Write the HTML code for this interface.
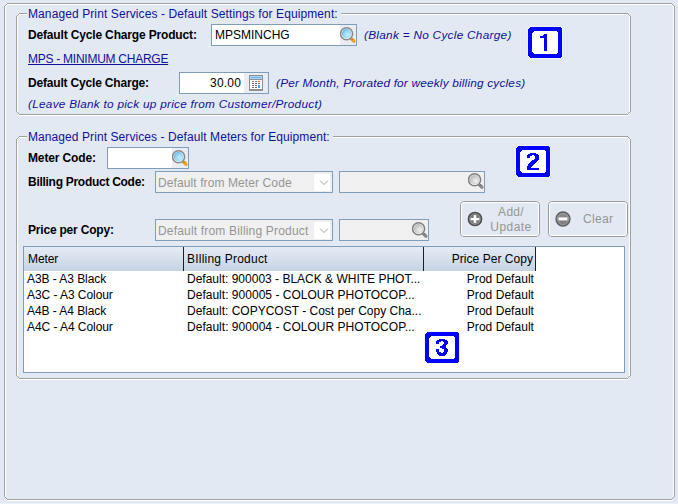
<!DOCTYPE html>
<html><head><meta charset="utf-8">
<style>
*{box-sizing:border-box;margin:0;padding:0}
html,body{width:678px;height:504px;overflow:hidden;background:#E3E9F3;font-family:"Liberation Sans",sans-serif;font-size:12px;position:relative}
.a{position:absolute}
.t{position:absolute;white-space:nowrap;line-height:16px}
.b{font-weight:bold;color:#000}
.i{font-style:italic;color:#10109C;font-size:11.8px}
.ttl{color:#10109C;background:#E3E9F3;padding:0 3px 0 1px}
.inp{position:absolute;border:1px solid #7F9DB9;background:#fff}
.dis{background:#F0F0F0}
.btnbg{position:absolute;background:#E9EDF3}
.gtxt{color:#959595}
.sep{position:absolute;width:1px;background:#1E1E1E}
</style></head><body>
<div class="a" style="left:0;top:503px;width:678px;height:1px;background:#ECF0F7"></div>
<svg class="a" style="left:4px;top:3px" width="671" height="498" viewBox="0 0 671 498" shape-rendering="crispEdges">
<g fill="#A0A0A0"><rect x="3" y="0" width="665" height="1"/><rect x="0" y="3" width="1" height="491"/><rect x="670" y="3" width="1" height="491"/><rect x="3" y="496" width="665" height="1"/>
<rect x="1" y="2" width="1" height="1"/><rect x="2" y="1" width="1" height="1"/>
<rect x="668" y="1" width="1" height="1"/><rect x="669" y="2" width="1" height="1"/>
<rect x="1" y="494" width="1" height="1"/><rect x="2" y="495" width="1" height="1"/>
<rect x="668" y="495" width="1" height="1"/><rect x="669" y="494" width="1" height="1"/></g>
<g fill="#FFFFFF"><rect x="3" y="1" width="665" height="1"/><rect x="1" y="3" width="1" height="491"/><rect x="669" y="3" width="1" height="491"/><rect x="3" y="497" width="665" height="1"/>
<rect x="2" y="2" width="1" height="1"/><rect x="668" y="2" width="1" height="1"/><rect x="2" y="496" width="1" height="1"/><rect x="668" y="496" width="1" height="1"/></g>
</svg><svg class="a" style="left:16px;top:13px" width="615" height="103" viewBox="0 0 615 103" shape-rendering="crispEdges">
<g fill="#A0A0A0"><rect x="3" y="0" width="609" height="1"/><rect x="0" y="3" width="1" height="96"/><rect x="614" y="3" width="1" height="96"/><rect x="3" y="101" width="609" height="1"/>
<rect x="1" y="2" width="1" height="1"/><rect x="2" y="1" width="1" height="1"/>
<rect x="612" y="1" width="1" height="1"/><rect x="613" y="2" width="1" height="1"/>
<rect x="1" y="99" width="1" height="1"/><rect x="2" y="100" width="1" height="1"/>
<rect x="612" y="100" width="1" height="1"/><rect x="613" y="99" width="1" height="1"/></g>
<g fill="#FFFFFF"><rect x="3" y="1" width="609" height="1"/><rect x="1" y="3" width="1" height="96"/><rect x="613" y="3" width="1" height="96"/><rect x="3" y="102" width="609" height="1"/>
<rect x="2" y="2" width="1" height="1"/><rect x="612" y="2" width="1" height="1"/><rect x="2" y="101" width="1" height="1"/><rect x="612" y="101" width="1" height="1"/></g>
</svg><div id="t1" class="t ttl" style="letter-spacing:0.1px;left:27px;top:6px">Managed Print Services - Default Settings for Equipment:</div>
<div id="t2" class="t b" style="letter-spacing:-0.16px;left:28px;top:27px">Default Cycle Charge Product:</div>
<div class="inp" style="left:211px;top:24px;width:146px;height:22px"></div>
<div class="btnbg" style="left:340px;top:25px;width:16px;height:20px"></div>
<svg class="a" style="left:340px;top:27px" width="17" height="17" viewBox="0 0 17 17">
<defs><radialGradient id="mg340_27" cx="0.62" cy="0.62" r="0.65"><stop offset="0" stop-color="#C4F2FD"/><stop offset="0.7" stop-color="#92D2F4"/><stop offset="1" stop-color="#5EB2EC"/></radialGradient></defs>
<path d="M11.8,12.1 L13.9,14.2" stroke="#D4901E" stroke-width="3.2" stroke-linecap="round"/>
<circle cx="13.5" cy="13.8" r="1.1" fill="#FFB020"/>
<circle cx="10.8" cy="11.1" r="1" fill="#9AB0C8"/>
<circle cx="6.6" cy="6.8" r="6" fill="#FFFFFF" stroke="#8A8A8A" stroke-width="1.6"/>
<circle cx="6.6" cy="6.8" r="4.7" fill="url(#mg340_27)"/>
</svg><div id="t3" class="t" style="left:215px;top:27px;color:#000">MPSMINCHG</div>
<div id="t4" class="t i" style="letter-spacing:0.28px;left:364px;top:27px">(Blank = No Cycle Charge)</div>
<svg class="a" style="left:527px;top:26px" width="36" height="33" viewBox="-1 -1 36 33" shape-rendering="crispEdges">
<path d="M2,-1H32L35,2V29L32,32H2L-1,29V2Z" fill="#F2F6F0" opacity="0.8"/>
<path d="M2,0H32L34,2V29L32,31H2L0,29V2Z" fill="#0000FF"/>
<path d="M6,4H28L30,6V25L28,27H6L4,25V6Z" fill="#FFFFFF"/>
<g fill="#0000FF"><rect x="16" y="7" width="3" height="1"/><rect x="15" y="8" width="4" height="1"/><rect x="12" y="9" width="7" height="1"/><rect x="12" y="10" width="7" height="1"/><rect x="16" y="11" width="3" height="1"/><rect x="16" y="12" width="3" height="1"/><rect x="16" y="13" width="3" height="1"/><rect x="16" y="14" width="3" height="1"/><rect x="16" y="15" width="3" height="1"/><rect x="16" y="16" width="3" height="1"/><rect x="16" y="17" width="3" height="1"/><rect x="16" y="18" width="3" height="1"/><rect x="16" y="19" width="3" height="1"/><rect x="16" y="20" width="3" height="1"/><rect x="16" y="21" width="3" height="1"/><rect x="16" y="22" width="3" height="1"/><rect x="16" y="23" width="3" height="1"/></g></svg><div id="t5" class="t" style="letter-spacing:-0.26px;left:28px;top:51px;color:#10109C;text-decoration:underline">MPS - MINIMUM CHARGE</div>
<div id="t6" class="t b" style="letter-spacing:-0.18px;left:28px;top:75px">Default Cycle Charge:</div>
<div class="inp" style="left:179px;top:72px;width:90px;height:22px"></div>
<div class="btnbg" style="left:244px;top:73px;width:24px;height:20px"></div>
<svg class="a" style="left:249px;top:75px" width="14" height="16" viewBox="0 0 14 16" shape-rendering="crispEdges">
<rect x="0" y="0" width="14" height="16" fill="#8F8F8F"/>
<rect x="1" y="1" width="12" height="3" fill="#A9D6FB"/>
<rect x="2" y="2" width="10" height="1" fill="#6FB0EC"/>
<rect x="1" y="5" width="12" height="9" fill="#FFFFFF"/>
<rect x="3" y="6" width="2" height="1" fill="#F0702A"/><rect x="6" y="6" width="2" height="1" fill="#7A7A7A"/><rect x="9" y="6" width="2" height="1" fill="#F0702A"/>
<rect x="3" y="8" width="2" height="1" fill="#6A6A6A"/><rect x="6" y="8" width="2" height="1" fill="#6A6A6A"/><rect x="9" y="8" width="2" height="1" fill="#6A6A6A"/>
<rect x="3" y="10" width="2" height="1" fill="#6A6A6A"/><rect x="6" y="10" width="2" height="1" fill="#6A6A6A"/>
<rect x="3" y="12" width="2" height="1" fill="#6A6A6A"/><rect x="6" y="12" width="2" height="1" fill="#6A6A6A"/>
<rect x="9" y="10" width="2" height="3" fill="#4A9BEA"/>
</svg><div id="t7" class="t" style="letter-spacing:0.18px;left:181px;top:75px;width:60px;text-align:right;color:#000">30.00</div>
<div id="t8" class="t i" style="letter-spacing:0.2px;left:276px;top:75px">(Per Month, Prorated for weekly billing cycles)</div>
<div id="t9" class="t i" style="letter-spacing:0.26px;left:28px;top:96px">(Leave Blank to pick up price from Customer/Product)</div>
<svg class="a" style="left:16px;top:136px" width="615" height="244" viewBox="0 0 615 244" shape-rendering="crispEdges">
<g fill="#A0A0A0"><rect x="3" y="0" width="609" height="1"/><rect x="0" y="3" width="1" height="237"/><rect x="614" y="3" width="1" height="237"/><rect x="3" y="242" width="609" height="1"/>
<rect x="1" y="2" width="1" height="1"/><rect x="2" y="1" width="1" height="1"/>
<rect x="612" y="1" width="1" height="1"/><rect x="613" y="2" width="1" height="1"/>
<rect x="1" y="240" width="1" height="1"/><rect x="2" y="241" width="1" height="1"/>
<rect x="612" y="241" width="1" height="1"/><rect x="613" y="240" width="1" height="1"/></g>
<g fill="#FFFFFF"><rect x="3" y="1" width="609" height="1"/><rect x="1" y="3" width="1" height="237"/><rect x="613" y="3" width="1" height="237"/><rect x="3" y="243" width="609" height="1"/>
<rect x="2" y="2" width="1" height="1"/><rect x="612" y="2" width="1" height="1"/><rect x="2" y="242" width="1" height="1"/><rect x="612" y="242" width="1" height="1"/></g>
</svg><div id="t10" class="t ttl" style="letter-spacing:0.08px;left:27px;top:129px">Managed Print Services - Default Meters for Equipment:</div>
<div id="t11" class="t b" style="letter-spacing:-0.14px;left:28px;top:150px">Meter Code:</div>
<div class="inp" style="left:107px;top:147px;width:82px;height:22px"></div>
<div class="btnbg" style="left:172px;top:148px;width:16px;height:20px"></div>
<svg class="a" style="left:172px;top:150px" width="17" height="17" viewBox="0 0 17 17">
<defs><radialGradient id="mg172_150" cx="0.62" cy="0.62" r="0.65"><stop offset="0" stop-color="#C4F2FD"/><stop offset="0.7" stop-color="#92D2F4"/><stop offset="1" stop-color="#5EB2EC"/></radialGradient></defs>
<path d="M11.8,12.1 L13.9,14.2" stroke="#D4901E" stroke-width="3.2" stroke-linecap="round"/>
<circle cx="13.5" cy="13.8" r="1.1" fill="#FFB020"/>
<circle cx="10.8" cy="11.1" r="1" fill="#9AB0C8"/>
<circle cx="6.6" cy="6.8" r="6" fill="#FFFFFF" stroke="#8A8A8A" stroke-width="1.6"/>
<circle cx="6.6" cy="6.8" r="4.7" fill="url(#mg172_150)"/>
</svg><svg class="a" style="left:515px;top:145px" width="36" height="33" viewBox="-1 -1 36 33" shape-rendering="crispEdges">
<path d="M2,-1H32L35,2V29L32,32H2L-1,29V2Z" fill="#F2F6F0" opacity="0.8"/>
<path d="M2,0H32L34,2V29L32,31H2L0,29V2Z" fill="#0000FF"/>
<path d="M6,4H28L30,6V25L28,27H6L4,25V6Z" fill="#FFFFFF"/>
<g fill="#0000FF"><rect x="14" y="7" width="6" height="1"/><rect x="12" y="8" width="10" height="1"/><rect x="11" y="9" width="5" height="1"/><rect x="18" y="9" width="5" height="1"/><rect x="11" y="10" width="3" height="1"/><rect x="19" y="10" width="4" height="1"/><rect x="11" y="11" width="3" height="1"/><rect x="19" y="11" width="4" height="1"/><rect x="19" y="12" width="4" height="1"/><rect x="18" y="13" width="5" height="1"/><rect x="16" y="14" width="6" height="1"/><rect x="15" y="15" width="6" height="1"/><rect x="14" y="16" width="6" height="1"/><rect x="13" y="17" width="6" height="1"/><rect x="12" y="18" width="6" height="1"/><rect x="12" y="19" width="5" height="1"/><rect x="11" y="20" width="5" height="1"/><rect x="11" y="21" width="4" height="1"/><rect x="11" y="22" width="12" height="1"/><rect x="11" y="23" width="12" height="1"/></g></svg><div id="t12" class="t b" style="letter-spacing:-0.28px;left:28px;top:174px">Billing Product Code:</div>
<div class="inp dis" style="left:155px;top:171px;width:178px;height:22px"></div>
<div class="a" style="left:314px;top:174px;width:16px;height:17px;background:#fff"></div>
<svg class="a" style="left:319px;top:179px" width="10" height="7" viewBox="0 0 10 7"><path d="M1,1.5 L5,5.5 L9,1.5" fill="none" stroke="#A4A4A4" stroke-width="1"/></svg><div id="t13" class="t gtxt" style="letter-spacing:0.1px;left:158px;top:175px">Default from Meter Code</div>
<div class="inp dis" style="left:339px;top:171px;width:146px;height:22px"></div>
<svg class="a" style="left:468px;top:173px" width="17" height="17" viewBox="0 0 17 17">
<defs><radialGradient id="mg468_173" cx="0.62" cy="0.62" r="0.65"><stop offset="0" stop-color="#F4F4F4"/><stop offset="1" stop-color="#B8B8B8"/></radialGradient></defs>
<path d="M11.8,12.1 L13.9,14.2" stroke="#7C7C7C" stroke-width="3.2" stroke-linecap="round"/>
<circle cx="13.5" cy="13.8" r="1.1" fill="#959595"/>
<circle cx="10.8" cy="11.1" r="1" fill="#A0A0A0"/>
<circle cx="6.6" cy="6.8" r="6" fill="#FFFFFF" stroke="#808080" stroke-width="1.6"/>
<circle cx="6.6" cy="6.8" r="4.7" fill="url(#mg468_173)"/>
</svg><div id="t14" class="t b" style="letter-spacing:-0.2px;left:28px;top:222px">Price per Copy:</div>
<div class="inp dis" style="left:155px;top:219px;width:178px;height:22px"></div>
<div class="a" style="left:314px;top:222px;width:16px;height:17px;background:#fff"></div>
<svg class="a" style="left:319px;top:227px" width="10" height="7" viewBox="0 0 10 7"><path d="M1,1.5 L5,5.5 L9,1.5" fill="none" stroke="#A4A4A4" stroke-width="1"/></svg><div id="t15" class="t gtxt" style="letter-spacing:0.18px;left:158px;top:223px">Default from Billing Product</div>
<div class="inp dis" style="left:339px;top:219px;width:90px;height:22px"></div>
<svg class="a" style="left:412px;top:222px" width="17" height="17" viewBox="0 0 17 17">
<defs><radialGradient id="mg412_222" cx="0.62" cy="0.62" r="0.65"><stop offset="0" stop-color="#F4F4F4"/><stop offset="1" stop-color="#B8B8B8"/></radialGradient></defs>
<path d="M11.8,12.1 L13.9,14.2" stroke="#7C7C7C" stroke-width="3.2" stroke-linecap="round"/>
<circle cx="13.5" cy="13.8" r="1.1" fill="#959595"/>
<circle cx="10.8" cy="11.1" r="1" fill="#A0A0A0"/>
<circle cx="6.6" cy="6.8" r="6" fill="#FFFFFF" stroke="#808080" stroke-width="1.6"/>
<circle cx="6.6" cy="6.8" r="4.7" fill="url(#mg412_222)"/>
</svg><div class="a" style="left:460px;top:201px;width:80px;height:36px;border:1px solid #9A9A9A;border-radius:4px"><div class="a" style="left:0;top:0;right:0;bottom:0;border:1px solid #fff;border-radius:3px"></div></div>
<svg class="a" style="left:464.9px;top:209px" width="20" height="20" viewBox="0 0 20 20">
<defs><linearGradient id="pm474" x1="0" y1="0" x2="0" y2="1"><stop offset="0" stop-color="#6A6A6A"/><stop offset="1" stop-color="#7E7E7E"/></linearGradient></defs>
<circle cx="10" cy="10" r="6.7" fill="url(#pm474)" stroke="#4A4A4A" stroke-width="1.3"/>
<circle cx="10" cy="10" r="5.2" fill="none" stroke="#A8A8A8" stroke-width="0.7" opacity="0.8"/>
<rect x="5.7" y="8.9" width="8.6" height="2.4" fill="#fff"/><rect x="8.7" y="6.1" width="2.6" height="7.8" fill="#fff"/></svg><div id="t16" class="t gtxt" style="letter-spacing:0.28px;left:490px;top:204px;width:42px;text-align:center">Add/</div>
<div id="t17" class="t gtxt" style="letter-spacing:0.44px;left:490px;top:219px;width:42px;text-align:center">Update</div>
<div class="a" style="left:548px;top:201px;width:80px;height:36px;border:1px solid #9A9A9A;border-radius:4px"><div class="a" style="left:0;top:0;right:0;bottom:0;border:1px solid #fff;border-radius:3px"></div></div>
<svg class="a" style="left:552.5px;top:208.5px" width="20" height="20" viewBox="0 0 20 20">
<defs><linearGradient id="pm562" x1="0" y1="0" x2="0" y2="1"><stop offset="0" stop-color="#8C8C8C"/><stop offset="1" stop-color="#7A7A7A"/></linearGradient></defs>
<circle cx="10" cy="10" r="7" fill="url(#pm562)" stroke="#5E5E5E" stroke-width="1.3"/>
<circle cx="10" cy="10" r="5.5" fill="none" stroke="#B4B4B4" stroke-width="0.7" opacity="0.8"/>
<rect x="5.6" y="8.4" width="8.8" height="3" fill="#fff"/></svg><div id="t18" class="t gtxt" style="letter-spacing:0.3px;left:583px;top:211px">Clear</div>
<div class="a" style="left:23px;top:246px;width:602px;height:127px;border:1px solid #7F9DB9;background:#fff"></div>
<div class="a" style="left:24px;top:247px;width:512px;height:24px;background:linear-gradient(#E5EBF4,#C6D3E3)"></div>
<div class="sep" style="left:183px;top:247px;height:24px"></div>
<div class="sep" style="left:423px;top:247px;height:24px"></div>
<div class="sep" style="left:535px;top:247px;height:24px"></div>
<div id="t19" class="t" style="letter-spacing:-0.08px;left:28px;top:251px">Meter</div>
<div id="t20" class="t" style="letter-spacing:0.22px;left:187px;top:251px">BIlling Product</div>
<div id="t21" class="t" style="letter-spacing:0.04px;left:424px;top:251px;width:109px;text-align:right">Price Per Copy</div>
<div id="t22" class="t" style="letter-spacing:-0.06px;left:27px;top:271px">A3B - A3 Black</div>
<div id="t23" class="t" style="left:187px;top:271px">Default: 900003 - BLACK &amp; WHITE PHOT...</div>
<div id="t24" class="t" style="letter-spacing:0.04px;left:424px;top:271px;width:110px;text-align:right">Prod Default</div>
<div id="t25" class="t" style="letter-spacing:-0.06px;left:27px;top:287px">A3C - A3 Colour</div>
<div id="t26" class="t" style="letter-spacing:0.02px;left:187px;top:287px">Default: 900005 - COLOUR PHOTOCOP...</div>
<div id="t27" class="t" style="letter-spacing:0.04px;left:424px;top:287px;width:110px;text-align:right">Prod Default</div>
<div id="t28" class="t" style="letter-spacing:-0.06px;left:27px;top:303px">A4B - A4 Black</div>
<div id="t29" class="t" style="left:187px;top:303px">Default: COPYCOST - Cost per Copy Cha...</div>
<div id="t30" class="t" style="letter-spacing:0.04px;left:424px;top:303px;width:110px;text-align:right">Prod Default</div>
<div id="t31" class="t" style="letter-spacing:-0.06px;left:27px;top:319px">A4C - A4 Colour</div>
<div id="t32" class="t" style="letter-spacing:0.02px;left:187px;top:319px">Default: 900004 - COLOUR PHOTOCOP...</div>
<div id="t33" class="t" style="letter-spacing:0.04px;left:424px;top:319px;width:110px;text-align:right">Prod Default</div>
<svg class="a" style="left:424px;top:331px" width="36" height="33" viewBox="-1 -1 36 33" shape-rendering="crispEdges">
<path d="M2,-1H32L35,2V29L32,32H2L-1,29V2Z" fill="#F2F6F0" opacity="0.8"/>
<path d="M2,0H32L34,2V29L32,31H2L0,29V2Z" fill="#0000FF"/>
<path d="M6,4H28L30,6V25L28,27H6L4,25V6Z" fill="#FFFFFF"/>
<g fill="#0000FF"><rect x="14" y="7" width="6" height="1"/><rect x="12" y="8" width="10" height="1"/><rect x="11" y="9" width="5" height="1"/><rect x="18" y="9" width="5" height="1"/><rect x="11" y="10" width="3" height="1"/><rect x="19" y="10" width="4" height="1"/><rect x="11" y="11" width="3" height="1"/><rect x="19" y="11" width="4" height="1"/><rect x="18" y="12" width="4" height="1"/><rect x="17" y="13" width="4" height="1"/><rect x="15" y="14" width="6" height="1"/><rect x="15" y="15" width="6" height="1"/><rect x="17" y="16" width="5" height="1"/><rect x="11" y="17" width="3" height="1"/><rect x="19" y="17" width="4" height="1"/><rect x="11" y="18" width="3" height="1"/><rect x="19" y="18" width="4" height="1"/><rect x="11" y="19" width="3" height="1"/><rect x="19" y="19" width="4" height="1"/><rect x="12" y="20" width="4" height="1"/><rect x="18" y="20" width="4" height="1"/><rect x="12" y="21" width="10" height="1"/><rect x="13" y="22" width="8" height="1"/><rect x="14" y="23" width="6" height="1"/></g></svg></body></html>
